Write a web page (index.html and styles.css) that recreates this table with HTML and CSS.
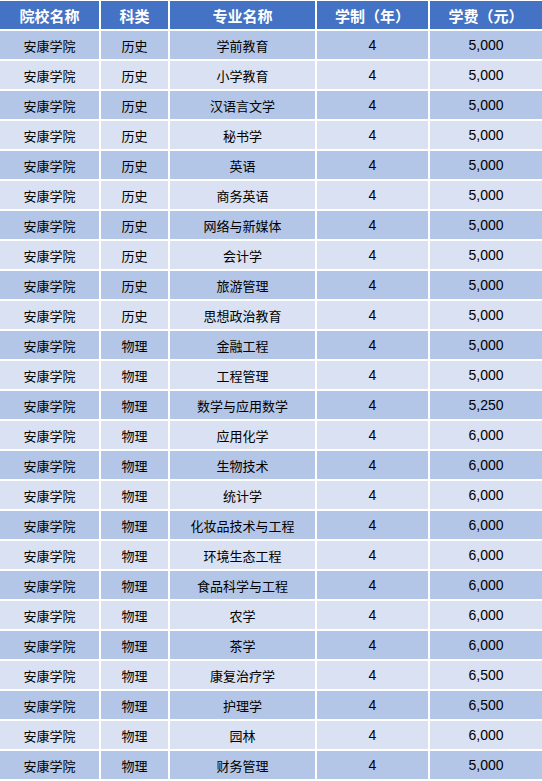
FILE: index.html
```html
<!DOCTYPE html>
<html lang="zh">
<head>
<meta charset="utf-8">
<title>安康学院</title>
<link rel="stylesheet" href="styles.css">
</head>
<body>
<div class="table">
  <div class="row head"><div>院校名称</div><div>科类</div><div>专业名称</div><div>学制（年）</div><div>学费（元）</div></div>
  <div class="row odd"><div>安康学院</div><div>历史</div><div>学前教育</div><div class="num">4</div><div class="num">5,000</div></div>
  <div class="row even"><div>安康学院</div><div>历史</div><div>小学教育</div><div class="num">4</div><div class="num">5,000</div></div>
  <div class="row odd"><div>安康学院</div><div>历史</div><div>汉语言文学</div><div class="num">4</div><div class="num">5,000</div></div>
  <div class="row even"><div>安康学院</div><div>历史</div><div>秘书学</div><div class="num">4</div><div class="num">5,000</div></div>
  <div class="row odd"><div>安康学院</div><div>历史</div><div>英语</div><div class="num">4</div><div class="num">5,000</div></div>
  <div class="row even"><div>安康学院</div><div>历史</div><div>商务英语</div><div class="num">4</div><div class="num">5,000</div></div>
  <div class="row odd"><div>安康学院</div><div>历史</div><div>网络与新媒体</div><div class="num">4</div><div class="num">5,000</div></div>
  <div class="row even"><div>安康学院</div><div>历史</div><div>会计学</div><div class="num">4</div><div class="num">5,000</div></div>
  <div class="row odd"><div>安康学院</div><div>历史</div><div>旅游管理</div><div class="num">4</div><div class="num">5,000</div></div>
  <div class="row even"><div>安康学院</div><div>历史</div><div>思想政治教育</div><div class="num">4</div><div class="num">5,000</div></div>
  <div class="row odd"><div>安康学院</div><div>物理</div><div>金融工程</div><div class="num">4</div><div class="num">5,000</div></div>
  <div class="row even"><div>安康学院</div><div>物理</div><div>工程管理</div><div class="num">4</div><div class="num">5,000</div></div>
  <div class="row odd"><div>安康学院</div><div>物理</div><div>数学与应用数学</div><div class="num">4</div><div class="num">5,250</div></div>
  <div class="row even"><div>安康学院</div><div>物理</div><div>应用化学</div><div class="num">4</div><div class="num">6,000</div></div>
  <div class="row odd"><div>安康学院</div><div>物理</div><div>生物技术</div><div class="num">4</div><div class="num">6,000</div></div>
  <div class="row even"><div>安康学院</div><div>物理</div><div>统计学</div><div class="num">4</div><div class="num">6,000</div></div>
  <div class="row odd"><div>安康学院</div><div>物理</div><div>化妆品技术与工程</div><div class="num">4</div><div class="num">6,000</div></div>
  <div class="row even"><div>安康学院</div><div>物理</div><div>环境生态工程</div><div class="num">4</div><div class="num">6,000</div></div>
  <div class="row odd"><div>安康学院</div><div>物理</div><div>食品科学与工程</div><div class="num">4</div><div class="num">6,000</div></div>
  <div class="row even"><div>安康学院</div><div>物理</div><div>农学</div><div class="num">4</div><div class="num">6,000</div></div>
  <div class="row odd"><div>安康学院</div><div>物理</div><div>茶学</div><div class="num">4</div><div class="num">6,000</div></div>
  <div class="row even"><div>安康学院</div><div>物理</div><div>康复治疗学</div><div class="num">4</div><div class="num">6,500</div></div>
  <div class="row odd"><div>安康学院</div><div>物理</div><div>护理学</div><div class="num">4</div><div class="num">6,500</div></div>
  <div class="row even"><div>安康学院</div><div>物理</div><div>园林</div><div class="num">4</div><div class="num">6,000</div></div>
  <div class="row odd"><div>安康学院</div><div>物理</div><div>财务管理</div><div class="num">4</div><div class="num">5,000</div></div>
</div>
</body>
</html>
```
FILE: styles.css
```css
html, body {
  margin: 0;
  padding: 0;
  background: #ffffff;
}
body {
  font-family: "Liberation Sans", "Noto Sans CJK SC", sans-serif;
  font-size: 13px;
  color: #000;
}
.table {
  display: grid;
  row-gap: 2px;
  padding-top: 1px;
  width: 542px;
}
.row {
  display: grid;
  grid-template-columns: 99px 67px 145px 111px 112px;
  column-gap: 2px;
  height: 28px;
}
.row > div {
  display: flex;
  align-items: center;
  justify-content: center;
  white-space: nowrap;
}
.row .num {
  font-size: 14px;
}
.head > div {
  background: #4472c4;
  color: #fff;
  font-weight: bold;
  font-size: 15px;
}
.odd > div {
  background: #b4c6e7;
}
.even > div {
  background: #d9e1f2;
}
```
